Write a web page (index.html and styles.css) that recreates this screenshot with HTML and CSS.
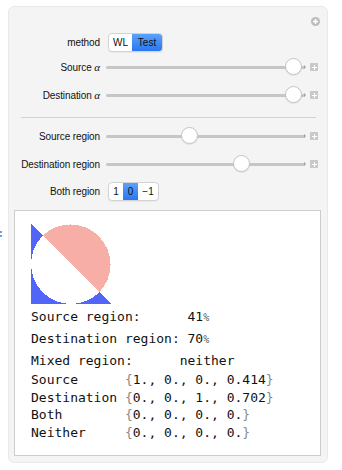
FILE: index.html
```html
<!DOCTYPE html>
<html lang="en">
<head>
    <meta charset="UTF-8">
    <title>Region Blend</title>
    <link rel="stylesheet" href="styles.css">
</head>
<body>
    <span class="cell-mark"></span>
    <div class="panel">
        <div class="toolbar">
            <span class="add-icon">
                <svg width="9" height="9" viewBox="0 0 9 9">
                    <circle cx="4.5" cy="4.5" r="4.5" fill="#bcbcbc"/>
                    <path d="M4.5 2v5M2 4.5h5" stroke="#fff" stroke-width="1.6"/>
                </svg>
            </span>
        </div>

        <div class="row row-method">
            <label class="label">method</label>
            <div class="toggle">
                <span class="seg w-wl">WL</span>
                <span class="seg w-test active">Test</span>
            </div>
        </div>

        <div class="row row-src-alpha">
            <label class="label">Source <i>α</i></label>
            <div class="slider">
                <div class="track"></div>
                <div class="thumb" style="left: calc((100% - 17px) * 0.985)"></div>
            </div>
            <span class="plus-box"></span>
        </div>

        <div class="row row-dst-alpha">
            <label class="label">Destination <i>α</i></label>
            <div class="slider">
                <div class="track"></div>
                <div class="thumb" style="left: calc((100% - 17px) * 0.985)"></div>
            </div>
            <span class="plus-box"></span>
        </div>

        <div class="divider"></div>

        <div class="row row-src-region">
            <label class="label">Source region</label>
            <div class="slider">
                <div class="track"></div>
                <div class="thumb" style="left: calc((100% - 17px) * 0.41)"></div>
            </div>
            <span class="plus-box"></span>
        </div>

        <div class="row row-dst-region">
            <label class="label">Destination region</label>
            <div class="slider">
                <div class="track"></div>
                <div class="thumb" style="left: calc((100% - 17px) * 0.70)"></div>
            </div>
            <span class="plus-box"></span>
        </div>

        <div class="row row-both">
            <label class="label">Both region</label>
            <div class="toggle">
                <span class="seg w-one">1</span>
                <span class="seg w-zero active">0</span>
                <span class="seg w-neg">&minus;1</span>
            </div>
        </div>

        <div class="output">
            <svg class="graphic" width="80" height="80" viewBox="0 0 80 80" shape-rendering="crispEdges">
                <polygon points="0,0 0,80 80,80" fill="#5165fb"/>
                <circle cx="40" cy="40" r="40" fill="#fff"/>
                <path d="M11.72 11.72 A40 40 0 0 1 68.28 68.28 Z" fill="#f7aea7"/>
            </svg>

            <div class="result">
                <div class="result-line">Source region:      41<span class="pct">%</span></div>
                <div class="result-line">Destination region: 70<span class="pct">%</span></div>
                <div class="result-line">Mixed region:      neither</div>
            </div>

            <div class="colors">
                <div class="color-line">Source      <span class="br">{</span>1., 0., 0., 0.414<span class="br">}</span></div>
                <div class="color-line">Destination <span class="br">{</span>0., 0., 1., 0.702<span class="br">}</span></div>
                <div class="color-line">Both        <span class="br">{</span>0., 0., 0., 0.<span class="br">}</span></div>
                <div class="color-line">Neither     <span class="br">{</span>0., 0., 0., 0.<span class="br">}</span></div>
            </div>
        </div>
    </div>
</body>
</html>
```

FILE: styles.css
```css
* {
    margin: 0;
    padding: 0;
    box-sizing: border-box;
}

body {
    font-family: 'Liberation Sans', Arial, sans-serif;
    background: white;
    color: #1a1a1a;
    position: relative;
}

.cell-mark {
    position: absolute;
    left: 0;
    top: 231px;
    width: 2px;
    height: 6px;
    border-left: 2px dotted #6a9fe0;
}

.panel {
    margin: 6px 0 0 8px;
    width: 320px;
    height: 457px;
    background: #f4f4f4;
    border: 1px solid #e9e9e9;
    border-radius: 6px;
    padding-top: 10px;
    display: flex;
    flex-direction: column;
}

.toolbar {
    display: flex;
    justify-content: flex-end;
    height: 9px;
    padding-right: 7px;
    margin-bottom: 6px;
}

.add-icon {
    display: flex;
}

.row {
    display: flex;
    align-items: center;
    height: 20px;
}

.label {
    width: 91px;
    text-align: right;
    font-size: 10px;
    color: #111;
    margin-right: 6px;
    white-space: nowrap;
    letter-spacing: -0.1px;
}

.label i {
    font-family: 'Liberation Serif', serif;
    font-size: 11px;
}

.row-src-alpha { margin-top: 5px; }
.row-dst-alpha { margin-top: 8px; }
.row-dst-region { margin-top: 8px; }
.row-both { margin-top: 7px; }

.divider {
    height: 1px;
    background: #d2d2d2;
    margin: 12px 11px 8px 12px;
}

.toggle {
    display: flex;
    margin-left: 2px;
    border: 1px solid #d3d3d3;
    border-radius: 4px;
    background: white;
    overflow: hidden;
    height: 19px;
    box-shadow: 0 1px 1px rgba(0,0,0,0.05);
}

.seg {
    display: flex;
    align-items: center;
    justify-content: center;
    font-size: 10px;
    color: #111;
}

.seg.active {
    background: linear-gradient(#5aa2fa, #2a77f0);
}

.w-wl { width: 23px; }
.w-test { width: 30px; }
.w-one { width: 14px; }
.w-zero { width: 15px; }
.w-neg { width: 20px; }

.slider {
    position: relative;
    width: 199px;
    height: 20px;
    display: flex;
    align-items: center;
}

.track {
    width: 100%;
    height: 3px;
    background: #c6c6c6;
    border-radius: 2px;
    position: relative;
}

.track::after {
    content: '';
    position: absolute;
    right: -1px;
    top: -0.5px;
    border-left: 2px solid #a0a0a0;
    border-top: 2px solid transparent;
    border-bottom: 2px solid transparent;
}

.thumb {
    position: absolute;
    top: 1px;
    width: 17px;
    height: 17px;
    border-radius: 50%;
    background: white;
    border: 1px solid #c4c4c4;
    box-shadow: 0 1px 1px rgba(0,0,0,0.08);
}

.plus-box {
    width: 8px;
    height: 8px;
    margin-left: 5px;
    background: #c9c9c9;
    position: relative;
}

.plus-box::before,
.plus-box::after {
    content: '';
    position: absolute;
    background: white;
}

.plus-box::before {
    left: 1.5px;
    top: 3.5px;
    width: 5px;
    height: 1px;
}

.plus-box::after {
    left: 3.5px;
    top: 1.5px;
    width: 1px;
    height: 5px;
}

.output {
    margin: 9px 6px 0 5px;
    height: 246px;
    background: white;
    border: 1px solid #cdcdcd;
    padding: 13px 0 0 16px;
    font-family: 'DejaVu Sans Mono', monospace;
    font-size: 13px;
    color: #111;
}

.graphic {
    display: block;
}

.result {
    margin-top: 2px;
}

.result-line {
    white-space: pre;
    line-height: 21px;
}

.pct {
    font-size: 10px;
    color: #555;
}

.color-line {
    white-space: pre;
    line-height: 17.7px;
}

.br {
    color: #8a8a8a;
}
```
